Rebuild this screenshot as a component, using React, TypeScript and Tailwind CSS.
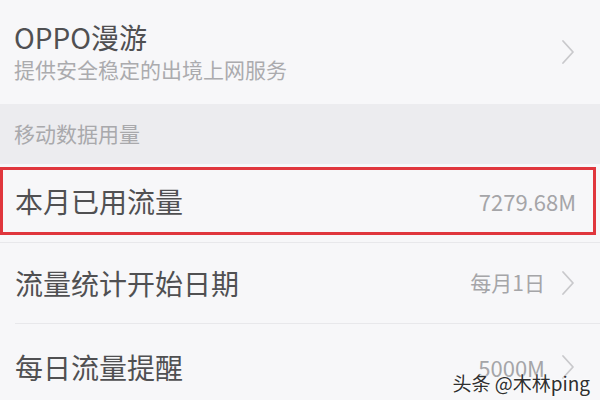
import React from "react";

const font = {
  fontFamily: '"Noto Sans CJK SC", "Noto Sans", sans-serif',
};

function Chevron() {
  return (
    <svg width="14" height="26" viewBox="0 0 14 26" className="shrink-0">
      <path d="M2 2 L12 13 L2 24" fill="none" stroke="#c9c9cc" strokeWidth="1.8" strokeLinecap="round" strokeLinejoin="round" />
    </svg>
  );
}

export default function App() {
  return (
    <div className="relative w-[600px] h-[400px] overflow-hidden bg-[#f7f7f9]" style={font}>
      {/* OPPO漫游 */}
      <div className="h-[104px] flex items-center justify-between pl-[14px] pr-[25px]">
        <div className="flex flex-col -mt-[3px]">
          <div className="text-[28px] leading-[36px] text-[#505052]">OPPO漫游</div>
          <div className="text-[21px] leading-[28px] text-[#ababae]">提供安全稳定的出境上网服务</div>
        </div>
        <Chevron />
      </div>

      {/* 分组标题 */}
      <div className="h-[60px] bg-[#ececef] flex items-center pl-[14px]">
        <span className="text-[21px] text-[#a9a9ac]">移动数据用量</span>
      </div>

      {/* 本月已用流量 */}
      <div className="h-[78px] pt-[3px] pr-[4px]">
        <div className="h-[68px] border-[3px] border-[#e0363d] flex items-center justify-between pl-[12px] pr-[17px]">
          <span className="text-[28px] text-[#505052]">本月已用流量</span>
          <span className="text-[22px] text-[#a5a5a8]">7279.68M</span>
        </div>
      </div>
      <div className="h-px bg-[#e8e8eb]" />

      {/* 流量统计开始日期 */}
      <div className="h-[80px] flex items-center justify-between pl-[15px] pr-[25px]">
        <span className="text-[28px] text-[#505052]">流量统计开始日期</span>
        <div className="flex items-center gap-[16px]">
          <span className="text-[21px] text-[#a5a5a8]">每月1日</span>
          <Chevron />
        </div>
      </div>
      <div className="ml-[15px] h-px bg-[#e8e8eb]" />

      {/* 每日流量提醒 */}
      <div className="h-[86px] flex items-center justify-between pl-[15px] pr-[25px]">
        <span className="text-[28px] text-[#505052]">每日流量提醒</span>
        <div className="flex items-center gap-[16px]">
          <span className="text-[22px] text-[#a5a5a8]">5000M</span>
          <Chevron />
        </div>
      </div>

      {/* 水印 */}
      <div className="absolute right-[10px] bottom-[3px] text-[19px] text-[#2f2f2f] [text-shadow:0_0_2px_#fff,0_0_3px_#fff]">
        头条 @木林ping
      </div>
    </div>
  );
}
